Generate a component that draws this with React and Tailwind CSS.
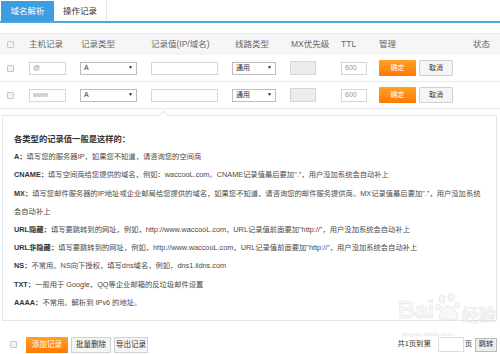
import React from "react";

const font = { fontFamily: '"Liberation Sans", "Noto Sans CJK SC", sans-serif' };

function Check() {
  return <div className="w-[7px] h-[7px] border border-[#c8c8c8] bg-[#f3f3f3] rounded-[1px]" />;
}

function Input({ w, value, gray }) {
  return (
    <div
      className={`h-[13px] border border-[#d6d6d6] flex items-center px-[3px] text-[7px] text-[#999] ${gray ? "bg-[#ececec] h-[14px]" : "bg-white"}`}
      style={{ width: w }}
    >
      {value}
    </div>
  );
}

function Select({ w, value }) {
  return (
    <div
      className="h-[13px] border border-[#bdbdbd] bg-white flex items-center justify-between px-[3px] text-[7px] text-[#333]"
      style={{ width: w }}
    >
      <span>{value}</span>
      <span className="text-[5px] text-[#222]">▼</span>
    </div>
  );
}

function DataRow({ host }) {
  return (
    <div className="flex items-center h-[27px] border-b border-[#ebebeb]">
      <div className="w-[29px] pl-[7px]"><Check /></div>
      <div className="w-[51px]"><Input w={37} value={host} /></div>
      <div className="w-[71px]"><Select w={57} value="A" /></div>
      <div className="w-[81px]"><Input w={67} value="" /></div>
      <div className="w-[58px]"><Select w={44} value="通用" /></div>
      <div className="w-[51px]"><Input w={26} value="" gray /></div>
      <div className="w-[38px]"><Input w={26} value="600" /></div>
      <div className="flex items-center gap-[3px]">
        <div className="w-[37px] h-[16px] bg-gradient-to-b from-[#ffa224] to-[#ff7800] text-white text-[7px] flex items-center justify-center rounded-[1px]">确定</div>
        <div className="w-[34px] h-[16px] bg-[#f5f5f5] border border-[#d0d0d0] text-[#333] text-[7px] flex items-center justify-center rounded-[1px]">取消</div>
      </div>
    </div>
  );
}

function Line({ label, children }) {
  return (
    <div className="whitespace-nowrap">
      <span className="font-bold text-[#333]">{label}</span>
      {children}
    </div>
  );
}

export default function App() {
  return (
    <div className="w-[500px] h-[354px] overflow-hidden relative bg-white text-[#444]" style={font}>
      {/* tabs */}
      <div className="flex h-[23px] border-b-2 border-[#4fa5df] items-end">
        <div className="w-[53px] h-[20px] ml-[1px] bg-[#3b9de2] text-white text-[8.5px] flex items-center justify-center">域名解析</div>
        <div className="w-[53px] h-[20px] text-[#333] text-[8.5px] flex items-center justify-center border-r border-[#e2e2e2]">操作记录</div>
      </div>

      {/* table */}
      <div className="mt-[10px]">
        <div className="flex items-center h-[22px] bg-[#f6f6f6] border-t border-[#ececec] text-[8.5px] text-[#666]">
          <div className="w-[29px] pl-[7px]"><Check /></div>
          <div className="w-[52px]">主机记录</div>
          <div className="w-[70px]">记录类型</div>
          <div className="w-[84px]">记录值(IP/域名)</div>
          <div className="w-[56px]">线路类型</div>
          <div className="w-[50px]">MX优先级</div>
          <div className="w-[38px]">TTL</div>
          <div className="w-[94px]">管理</div>
          <div>状态</div>
        </div>
        <DataRow host="@" />
        <DataRow host="www" />
      </div>

      {/* info panel */}
      <div className="relative mt-[6px] ml-[2px] mr-[3px] h-[206px] border border-[#e6e6e6] pt-[14px] pl-[11px] text-[7.3px] leading-[18.2px] text-[#4a4a4a]">
        <div className="absolute -top-[4px] left-[157px] w-[7px] h-[7px] bg-white border-l border-t border-[#e6e6e6] rotate-45" />
        <div className="font-bold text-[8.3px] text-[#333]">各类型的记录值一般是这样的：</div>
        <Line label="A：">填写您的服务器IP，如果您不知道，请咨询您的空间商</Line>
        <Line label="CNAME：">填写空间商给您提供的域名，例如：waccooL.com。CNAME记录值最后要加"."，用户没加系统会自动补上</Line>
        <Line label="MX：">填写您邮件服务器的IP地址或企业邮局给您提供的域名，如果您不知道，请咨询您的邮件服务提供商。MX记录值最后要加"."，用户没加系统</Line>
        <div className="whitespace-nowrap">会自动补上</div>
        <Line label="URL隐藏：">填写要跳转到的网址，例如，http://www.waccooL.com，URL记录值前面要加"http://"，用户没加系统会自动补上</Line>
        <Line label="URL非隐藏：">填写要跳转到的网址，例如，http://www.waccooL.com，URL记录值前面要加"http://"，用户没加系统会自动补上</Line>
        <Line label="NS：">不常用。NS向下授权，填写dns域名，例如，dns1.iidns.com</Line>
        <Line label="TXT：">一般用于 Google，QQ等企业邮箱的反垃圾邮件设置</Line>
        <Line label="AAAA：">不常用。解析到 IPv6 的地址。</Line>
      </div>

      {/* bottom bar */}
      <div className="flex items-center justify-between mt-[15px] h-[17px] pl-[10px]">
        <div className="flex items-center">
          <Check />
          <div className="ml-[9px] w-[42px] h-[16px] bg-gradient-to-b from-[#ffa224] to-[#ff7800] text-white text-[7.5px] flex items-center justify-center">添加记录</div>
          <div className="ml-[3px] w-[40px] h-[16px] bg-[#f5f5f5] border border-[#d0d0d0] text-[#333] text-[7.5px] flex items-center justify-center">批量删除</div>
          <div className="ml-[3px] w-[34px] h-[16px] bg-[#f5f5f5] border border-[#d0d0d0] text-[#333] text-[7.5px] flex items-center justify-center">导出记录</div>
        </div>
        <div className="flex items-center text-[7.3px] text-[#333]">
          <span>共1页到第</span>
          <div className="ml-[7px] w-[26px] h-[15px] border border-[#ddd] bg-white" />
          <span className="ml-[1px]">页</span>
          <div className="ml-[3px] mr-[3px] w-[22px] h-[14px] bg-[#eee] border border-[#bbb] flex items-center justify-center">跳转</div>
        </div>
      </div>

      {/* watermark */}
      <div className="absolute left-[398px] top-[292px] flex items-end pointer-events-none opacity-45">
        <span className="text-[24px] leading-none text-[#eeeeee] font-bold tracking-tight" style={{ fontFamily: '"Liberation Sans", sans-serif', WebkitTextStroke: "0.6px #c8c8c8" }}>Bai</span>
        <svg width="26" height="30" viewBox="0 0 26 30" className="mx-[1px]">
          <g fill="#eeeeee" stroke="#c8c8c8" strokeWidth="0.8">
            <ellipse cx="7" cy="7" rx="3" ry="4" />
            <ellipse cx="16" cy="5" rx="3" ry="4" />
            <ellipse cx="3" cy="15" rx="2.5" ry="3" />
            <ellipse cx="22" cy="13" rx="2.5" ry="3" />
            <path d="M4 26 C4 18 10 14 13 14 C17 14 23 19 23 26 C23 29 4 29 4 26 Z" />
          </g>
        </svg>
        <span className="text-[17px] leading-none text-[#eeeeee] font-bold" style={{ fontFamily: '"Noto Sans CJK SC", sans-serif', WebkitTextStroke: "0.5px #c8c8c8" }}>经验</span>
      </div>
      <div className="absolute left-[402px] top-[330px] text-[6px] text-[#e2e2e2] tracking-wide pointer-events-none">jingyan.baidu.com</div>
    </div>
  );
}
